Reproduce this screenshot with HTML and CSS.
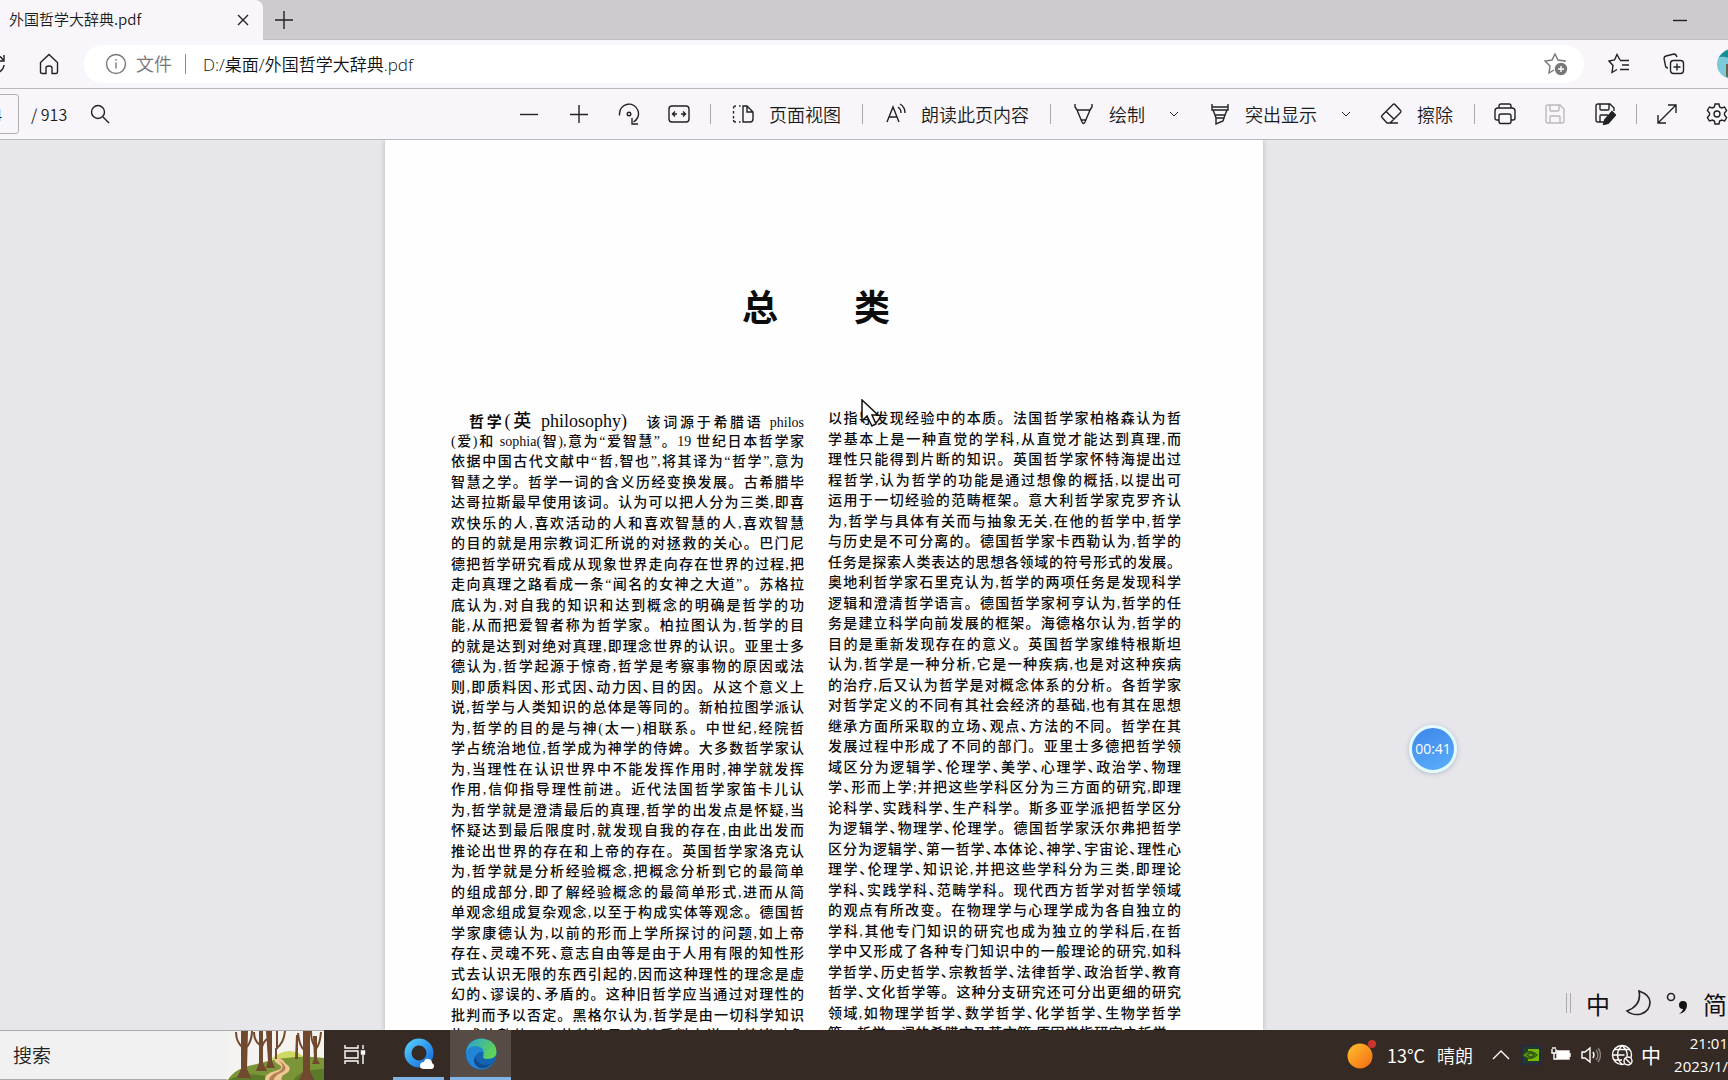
FILE: index.html
```html
<!DOCTYPE html>
<html lang="zh-CN">
<head>
<meta charset="utf-8">
<title>外国哲学大辞典.pdf</title>
<link rel="stylesheet" href="styles.css">
</head>
<body>
<header class="tabs">
  <div class="tab"><span class="tab-title">外国哲学大辞典.pdf</span><button class="plain" aria-label="关闭标签页"><svg width="12" height="12" viewBox="0 0 12 12"><path d="M1 1l10 10M11 1L1 11"/></svg></button></div>
  <button class="plain new-tab" aria-label="新建标签页"><svg width="18" height="18" viewBox="0 0 18 18"><path d="M9 0v18M0 9h18"/></svg></button>
  <button class="plain minimize" aria-label="最小化"><svg width="14" height="14" viewBox="0 0 14 14"><path d="M0 7.500h14"/></svg></button>
</header>

<nav class="address">
  <button class="plain reload" aria-label="刷新"><svg width="20" height="22" viewBox="0 0 20 22"><path d="M18 7a9 9 0 1 0 1 5M19 2v6h-6"/></svg></button>
  <button class="plain home" aria-label="主页"><svg width="20" height="22" viewBox="0 0 20 22"><path d="M1.500 9.500L10 1.500l8.500 8v9.500q0 1.500-1.500 1.500h-4v-5.500q0-2-3-2t-3 2v5.500h-4q-1.500 0-1.500-1.500z"/></svg></button>
  <div class="pill">
    <svg width="22" height="22" viewBox="0 0 22 22" class="grey"><circle cx="11" cy="11" r="9.500"/><path d="M11 9.500v6M11 6v1.500"/></svg>
    <label for="url">文件</label>
    <span class="bar"></span>
    <input id="url" value="D:/桌面/外国哲学大辞典.pdf">
    <button class="plain" aria-label="收藏此页"><svg width="24" height="24" viewBox="0 0 24 24" class="grey"><path d="M20 10l1-1-7-1-3-6-3 6-7 1 5 5-1 7 5-3"/><circle cx="17" cy="17" r="5.500" class="fill-grey"/><path d="M17 14v6M14 17h6" stroke="#fff"/></svg></button>
  </div>
  <button class="plain fav" aria-label="收藏夹"><svg width="22" height="22" viewBox="0 0 22 22"><path d="M12 7L9 1.500 6.500 7 1 8l4 4.500-1 7 5-3M12 7.500h9M14 12h7M12 16.500h9"/></svg></button>
  <button class="plain fav" aria-label="集锦"><svg width="22" height="22" viewBox="0 0 22 22"><rect x="7.500" y="7.500" width="13" height="13" rx="3"/><path d="M14 10.500v7M10.500 14h7M5 15q-2 0-2.500-2L1 5.500q0-2 2-2.500l8-2q2 0 3 3"/></svg></button>
  <svg class="avatar" width="30" height="30" viewBox="0 0 30 30"><circle cx="15" cy="15" r="15" fill="#7cc9d8" stroke="none"/><path d="M2 8Q8 0 15 0v11q-5-4-13-3z" fill="#168c96" stroke="none"/><path d="M9 15h6v15q-4-1-6-3z" fill="#66614f" stroke="none"/></svg>
</nav>

<div class="toolbar">
  <input class="page-no" aria-label="页码" value="4">
  <span class="total">/ 913</span>
  <button class="plain" aria-label="查找"><svg width="20" height="20" viewBox="0 0 20 20"><circle cx="8" cy="8" r="6.500"/><path d="M13 13l6 6"/></svg></button>
  <div class="tools">
    <button class="icon" aria-label="缩小"><svg width="18" height="18" viewBox="0 0 18 18"><path d="M0 9.500h18"/></svg></button>
    <button class="icon" aria-label="放大"><svg width="18" height="18" viewBox="0 0 18 18"><path d="M0 9.500h18M9 0v18"/></svg></button>
    <button class="icon" aria-label="旋转"><svg width="22" height="22" viewBox="0 0 22 22"><path d="M1.500 12.500v-2a9.500 9.500 0 1 1 14 8.500M14 15v6h6"/><circle cx="11" cy="11" r="1.800"/></svg></button>
    <button class="icon" aria-label="适合宽度"><svg width="22" height="22" viewBox="0 0 22 22"><rect x="1" y="3" width="20" height="16" rx="3"/><path d="M9 11H4.500M7 8.500L4.500 11 7 13.500M13 11h4.500M15 8.500l2.500 2.500-2.500 2.500"/></svg></button>
    <span class="sep"></span>
    <button class="text"><svg width="24" height="24" viewBox="0 0 24 24"><path d="M12 4v16h7q3 0 3-3v-7l-6-6zM16 4v6h6M5 4Q2.500 4 2.500 6.500M2.500 9v2.500M2.500 14v2.500M2.500 18q0 2 2.500 2M8 4h1.500M8 20h1.500"/></svg>页面视图</button>
    <span class="sep"></span>
    <button class="text"><svg width="24" height="24" viewBox="0 0 24 24"><path d="M4 20L10 5l6 15M6 15h8M15 5q3 2 3 6M17 2q5 3 5 9"/></svg>朗读此页内容</button>
    <span class="sep"></span>
    <button class="text"><svg width="24" height="24" viewBox="0 0 24 24"><path d="M4 2v3l2 3h13l2-3V2M6 8l5 12q1.500 3 3 0l5-12M10.500 18h4"/></svg>绘制</button>
    <button class="chev" aria-label="绘制选项"><svg width="10" height="10" viewBox="0 0 10 10"><path d="M1 3l4 4 4-4"/></svg></button>
    <button class="text"><svg width="24" height="24" viewBox="0 0 24 24"><path d="M5 2v6h16V2M5 5h16M6 8l2 5h10l2-5M8 13l1 3h8l1-3M9 16v6l7-3 1-3"/></svg>突出显示</button>
    <button class="chev" aria-label="突出显示选项"><svg width="10" height="10" viewBox="0 0 10 10"><path d="M1 3l4 4 4-4"/></svg></button>
    <button class="text"><svg width="24" height="24" viewBox="0 0 24 24"><path d="M14 2.500q1-1 2 0l5.500 6q1 1 0 2L11 21H8l-5-5.500q-1-1 0-2zM7 9.500l8 7.500M10 21h9"/></svg>擦除</button>
    <span class="sep"></span>
    <button class="icon" aria-label="打印"><svg width="22" height="22" viewBox="0 0 22 22"><path d="M5 5V3q0-2 2-2h8q2 0 2 2v2M5 17H3q-2 0-2-2V8q0-3 3-3h14q3 0 3 3v7q0 2-2 2h-2"/><rect x="5" y="11" width="12" height="9.500" rx="2"/></svg></button>
    <button class="icon off" aria-label="保存"><svg width="20" height="20" viewBox="0 0 20 20"><path d="M3 1h12l4 4v12q0 2-2 2H3q-2 0-2-2V3q0-2 2-2zM5 1v5q0 1 1 1h7q1 0 1-1V1M5 19v-6q0-1 1-1h8q1 0 1 1v6"/></svg></button>
    <button class="icon" aria-label="另存为"><svg width="22" height="22" viewBox="0 0 22 22"><path d="M10 19H4q-2 0-2-2V3q0-2 2-2h12l4 4v3M6 1v5q0 1 1 1h7q1 0 1-1V1M6 19v-6q0-1 1-1h7"/><path d="M18 9l3 3-7 8-4 1 1-4z" fill="#222" stroke-width="2"/></svg></button>
    <span class="sep"></span>
    <button class="icon" aria-label="全屏"><svg width="20" height="20" viewBox="0 0 20 20"><path d="M1 19L19 1M11 1h8v8M1 11v8h8"/></svg></button>
    <button class="icon" aria-label="设置"><svg width="22" height="22" viewBox="0 0 22 22"><path d="M9 1h4l.6 3 2 1 3-1 2 3.500L18.500 10v2l2.100 2.500-2 3.500-3-1-2 1-.6 3H9l-.6-3-2-1-3 1-2-3.500L3.500 12v-2L1.400 7.500l2-3.500 3 1 2-1z"/><circle cx="11" cy="11" r="3"/></svg></button>
  </div>
</div>

<main class="viewer">
  <article class="sheet">
    <h1><span>总</span><span>类</span></h1>
    <div class="columns">
      <div class="column">
        <p class="first"><b>哲学</b><span class="big">(英 philosophy)</span>　该词源于希腊语 philos</p>
        <p>(爱)和 sophia(智),意为“爱智慧”。19 世纪日本哲学家</p>
        <p>依据中国古代文献中“哲,智也”,将其译为“哲学”,意为</p>
        <p>智慧之学。哲学一词的含义历经变换发展。古希腊毕</p>
        <p>达哥拉斯最早使用该词。认为可以把人分为三类,即喜</p>
        <p>欢快乐的人,喜欢活动的人和喜欢智慧的人,喜欢智慧</p>
        <p>的目的就是用宗教词汇所说的对拯救的关心。巴门尼</p>
        <p>德把哲学研究看成从现象世界走向存在世界的过程,把</p>
        <p>走向真理之路看成一条“闻名的女神之大道”。苏格拉</p>
        <p>底认为,对自我的知识和达到概念的明确是哲学的功</p>
        <p>能,从而把爱智者称为哲学家。柏拉图认为,哲学的目</p>
        <p>的就是达到对绝对真理,即理念世界的认识。亚里士多</p>
        <p>德认为,哲学起源于惊奇,哲学是考察事物的原因或法</p>
        <p>则,即质料因<i>、</i>形式因<i>、</i>动力因<i>、</i>目的因。从这个意义上</p>
        <p>说,哲学与人类知识的总体是等同的。新柏拉图学派认</p>
        <p>为,哲学的目的是与神(太一)相联系。中世纪,经院哲</p>
        <p>学占统治地位,哲学成为神学的侍婢。大多数哲学家认</p>
        <p>为,当理性在认识世界中不能发挥作用时,神学就发挥</p>
        <p>作用,信仰指导理性前进。近代法国哲学家笛卡儿认</p>
        <p>为,哲学就是澄清最后的真理,哲学的出发点是怀疑,当</p>
        <p>怀疑达到最后限度时,就发现自我的存在,由此出发而</p>
        <p>推论出世界的存在和上帝的存在。英国哲学家洛克认</p>
        <p>为,哲学就是分析经验概念,把概念分析到它的最简单</p>
        <p>的组成部分,即了解经验概念的最简单形式,进而从简</p>
        <p>单观念组成复杂观念,以至于构成实体等观念。德国哲</p>
        <p>学家康德认为,以前的形而上学所探讨的问题,如上帝</p>
        <p>存在<i>、</i>灵魂不死<i>、</i>意志自由等是由于人用有限的知性形</p>
        <p>式去认识无限的东西引起的,因而这种理性的理念是虚</p>
        <p>幻的<i>、</i>谬误的<i>、</i>矛盾的。这种旧哲学应当通过对理性的</p>
        <p>批判而予以否定。黑格尔认为,哲学是由一切科学知识</p>
        <p>构成的整体。它的特性是,就其质料上说,对其诸对象</p>
      </div>
      <div class="column">
        <p>以指导发现经验中的本质。法国哲学家柏格森认为哲</p>
        <p>学基本上是一种直觉的学科,从直觉才能达到真理,而</p>
        <p>理性只能得到片断的知识。英国哲学家怀特海提出过</p>
        <p>程哲学,认为哲学的功能是通过想像的概括,以提出可</p>
        <p>运用于一切经验的范畴框架。意大利哲学家克罗齐认</p>
        <p>为,哲学与具体有关而与抽象无关,在他的哲学中,哲学</p>
        <p>与历史是不可分离的。德国哲学家卡西勒认为,哲学的</p>
        <p>任务是探索人类表达的思想各领域的符号形式的发展。</p>
        <p>奥地利哲学家石里克认为,哲学的两项任务是发现科学</p>
        <p>逻辑和澄清哲学语言。德国哲学家柯亨认为,哲学的任</p>
        <p>务是建立科学向前发展的框架。海德格尔认为,哲学的</p>
        <p>目的是重新发现存在的意义。英国哲学家维特根斯坦</p>
        <p>认为,哲学是一种分析,它是一种疾病,也是对这种疾病</p>
        <p>的治疗,后又认为哲学是对概念体系的分析。各哲学家</p>
        <p>对哲学定义的不同有其社会经济的基础,也有其在思想</p>
        <p>继承方面所采取的立场<i>、</i>观点<i>、</i>方法的不同。哲学在其</p>
        <p>发展过程中形成了不同的部门。亚里士多德把哲学领</p>
        <p>域区分为逻辑学<i>、</i>伦理学<i>、</i>美学<i>、</i>心理学<i>、</i>政治学<i>、</i>物理</p>
        <p>学<i>、</i>形而上学;并把这些学科区分为三方面的研究,即理</p>
        <p>论科学<i>、</i>实践科学<i>、</i>生产科学。斯多亚学派把哲学区分</p>
        <p>为逻辑学<i>、</i>物理学<i>、</i>伦理学。德国哲学家沃尔弗把哲学</p>
        <p>区分为逻辑学<i>、</i>第一哲学<i>、</i>本体论<i>、</i>神学<i>、</i>宇宙论<i>、</i>理性心</p>
        <p>理学<i>、</i>伦理学<i>、</i>知识论,并把这些学科分为三类,即理论</p>
        <p>学科<i>、</i>实践学科<i>、</i>范畴学科。现代西方哲学对哲学领域</p>
        <p>的观点有所改变。在物理学与心理学成为各自独立的</p>
        <p>学科,其他专门知识的研究也成为独立的学科后,在哲</p>
        <p>学中又形成了各种专门知识中的一般理论的研究,如科</p>
        <p>学哲学<i>、</i>历史哲学<i>、</i>宗教哲学<i>、</i>法律哲学<i>、</i>政治哲学<i>、</i>教育</p>
        <p>哲学<i>、</i>文化哲学等。这种分支研究还可分出更细的研究</p>
        <p>领域,如物理学哲学<i>、</i>数学哲学<i>、</i>化学哲学<i>、</i>生物学哲学</p>
        <p>等。哲学一词的希腊文及英文等,原因学指研究之哲学。</p>
      </div>
    </div>
  </article>
  <svg class="cursor" width="20" height="30" viewBox="0 0 20 30"><path d="M1 1v21l5-5 5 10 4-2-4-9h6z" fill="#fff" stroke="#111"/></svg>
  <div class="timer">00:41</div>
  <div class="ime">
    <span class="grip"></span><span>中</span>
    <svg width="26" height="26" viewBox="0 0 26 26"><path d="M14 1q3 14-12 20 6 5 14 3 9-3 9-12 0-7-11-11z" stroke-width="1.600"/></svg>
    <svg width="22" height="26" viewBox="0 0 22 26"><circle cx="5" cy="7" r="3.500" stroke-width="1.600"/><path d="M17 11a4 4 0 1 0 0 8q0 2-4 5 8-2 8-9 0-4-4-4z" fill="#111" stroke="none"/></svg>
    <span>简</span>
  </div>
</main>

<footer class="taskbar">
  <label class="search"><input value="搜索" aria-label="搜索">
    <svg width="97" height="50" viewBox="0 0 97 50">
      <rect width="97" height="50" fill="#f5f3f0" stroke="none"/>
      <path d="M44 28q10-8 18-8 10 0 17 8l-12 10z" fill="#cfd765" stroke="none"/>
      <path d="M0 50Q8 36 30 33q34-10 67-6v23z" fill="#7c9438" stroke="none"/>
      <path d="M0 50q16-10 38-5v5zM66 50q6-12 31-12v12z" fill="#5c7b2a" stroke="none"/>
      <path d="M48 28q6-2 11 5 8 5-1 10-5 3-3 7H38q-1-7 10-10 11-3 3-7-5-3-3-5z" fill="#efc893" stroke="none"/>
      <path d="M51 29q12 7 5 12-10 4-9 9h-5q0-6 9-9 9-5 0-12z" fill="#b38254" stroke="none"/>
      <g fill="#70492e" stroke="none"><path d="M14 0h7l-1 38 4 9H10l4-9zM32 0h4v32l4 8H29l3-8zM39 0h6v30l3 7h-9l2-7zM76 0h7v40l5 10H72l4-10zM86 5h4v23l3 5h-8l2-5zM69 4h2v24h-3z"/></g>
      <path d="M9 1q0 10 7 16M25 0q0 9-5 16M27 1q0 9 6 13M40 8q-3 2-5 8M58 0q-1 12-9 18v10M50 0v18M71 2q1 12 6 17M94 1q-1 12-5 17M84 0q0 10 4 16" stroke="#70492e" stroke-width="2"/>
    </svg></label>
  <button class="task" aria-label="任务视图"><svg width="22" height="22" viewBox="0 0 22 22" class="white"><path d="M1 1v3h13V1M1 20v-3h13v3M1 7h13v7H1zM19 1v4M19 11v9"/><path d="M17.500 7h3v3h-3z" fill="#fff"/></svg></button>
  <button class="task q running" aria-label="QQ浏览器"><svg width="30" height="32" viewBox="0 0 30 32">
    <defs><linearGradient id="qg" x1="0" y1="0" x2="1" y2="1"><stop offset="0" stop-color="#52c8fa"/><stop offset="1" stop-color="#176fe0"/></linearGradient></defs>
    <circle cx="15" cy="15" r="11" stroke="url(#qg)" stroke-width="7"/><path d="M20 31q-4 0-4-3 0-4 4-4 1-4 5-3 3 1 3 4 2 1 2 3 0 3-3 3z" fill="#fff" stroke="none"/></svg></button>
  <button class="task edge running" aria-label="Microsoft Edge"><svg width="32" height="32" viewBox="0 0 32 32">
    <defs><linearGradient id="eg" x1="0" y1="0" x2="1" y2="0.400"><stop offset="0" stop-color="#279ed8"/><stop offset="1" stop-color="#5fd35a"/></linearGradient></defs>
    <g stroke="none"><circle cx="16" cy="16" r="15.500" fill="#1464b4"/><path d="M1 14Q3 1 17 .5 31 2 31.500 14q0 7-9 7-6 0-4-4 1-8-7-8-7 0-10 5z" fill="url(#eg)"/><path d="M1 14q3-6 10-6 8 1 7 7-3-3-6 1-3 7 5 11 5 3 11-2-6 8-15 6Q1 28 1 14z" fill="#2386d5"/><path d="M12 16q-3 6 4 10 6 3 12-2-6 8-14 6-9-6-2-14z" fill="#114b91"/></g></svg></button>
  <div class="tray">
    <svg width="30" height="30" viewBox="0 0 30 30"><defs><linearGradient id="sg" x1="0" y1="0" x2="1" y2="1"><stop offset="0" stop-color="#ffc030"/><stop offset="1" stop-color="#f56a10"/></linearGradient></defs><circle cx="13" cy="16" r="12.500" fill="url(#sg)" stroke="none"/><circle cx="25" cy="4" r="4" fill="#c9372c" stroke="none"/></svg>
    <span class="temp">13°C</span><span class="sky">晴朗</span>
    <div class="status">
      <svg width="20" height="20" viewBox="0 0 20 20" class="white"><path d="M2 14l8-8 8 8"/></svg>
      <svg width="20" height="20" viewBox="0 0 20 20"><rect x="1" y="1" width="18" height="18" fill="#26392d" stroke="#1d2b50"/><path d="M7 4h11v12H7z" fill="#76b900" stroke="none"/><path d="M2 10q6-7 14 0-7 7-14 0zM6 10q4-4 7 0-3 4-7 0z" fill="#6aa30c" stroke="#325b18"/></svg>
      <svg width="20" height="20" viewBox="0 0 20 20" class="white"><rect x="6" y="6" width="12" height="8" fill="#fff"/><path d="M19 8v4M1 4v4h4V4M2 2v2M4 2v2M3 8v6h3"/></svg>
      <svg width="20" height="20" viewBox="0 0 20 20" class="white"><path d="M1 7h3l5-4v14l-5-4H1zM12 7q2 3 0 6"/><path d="M15 5q4 5 0 10M17 3q5 7 0 14" stroke="#8a817c"/></svg>
      <svg width="22" height="22" viewBox="0 0 22 22" class="white"><circle cx="11" cy="11" r="9.500"/><path d="M1.500 11h12M3 5.500h16M3 16h8M11 1.500q-9 9.500 0 19M11 1.500q6 5 5 11"/><circle cx="17" cy="17" r="4" fill="#362a24"/><path d="M14 14l6 6"/></svg>
    </div>
    <span class="lang">中</span>
    <div class="clock"><time>21:01</time><span>2023/1/</span></div>
  </div>
</footer>
</body>
</html>
```

FILE: styles.css
```css
* { box-sizing: border-box; }

body {
  margin: 0;
  height: 100vh;
  display: flex;
  flex-direction: column;
  overflow: hidden;
  background: #e7e6ea;
  color: #1b1b1b;
  font-family: "Noto Sans CJK SC", "Noto Sans", sans-serif;
  font-weight: 350;
  white-space: nowrap;
}

button, input { font: inherit; color: inherit; border: 0; padding: 0; background: none; }
button { display: flex; align-items: center; justify-content: center; flex: none; }
svg { display: block; flex: none; fill: none; stroke: #222; stroke-width: 1.4; }
.grey { stroke: #777; }
.white { stroke: #fff; }
.fill-grey { fill: #777; }

/* Tab strip */
.tabs { height: 40px; flex: none; display: flex; align-items: center; background: #cecbce; border-bottom: 1px solid #c2bfc3; }
.tab { width: 263px; height: 40px; padding: 0 14px 0 9px; display: flex; align-items: center; justify-content: space-between; background: #f8f6fa; border-top-right-radius: 8px; font-size: 15px; }
.tab-title { padding-bottom: 2px; }
.new-tab { margin-left: 12px; }
.minimize { margin-left: auto; margin-right: 41px; }

/* Address row */
.address { height: 49px; flex: none; display: flex; align-items: center; background: #f8f6fa; border-bottom: 1px solid #bab8bd; overflow: hidden; }
.reload { margin-left: -15px; }
.home { margin-left: 34px; }
.pill { flex: 1; height: 38px; margin-left: 25px; padding: 0 16px 0 21px; display: flex; align-items: center; border-radius: 19px; background: #fff; font-size: 18px; }
.pill label { margin-left: 9px; padding-bottom: 2px; color: #777; }
.bar { width: 1px; height: 20px; margin: 0 17px 0 13px; background: #888; }
.pill input { flex: 1; min-width: 0; padding-bottom: 2px; color: #111; outline: 0; font-family: "Open Sans", "Noto Sans CJK SC", sans-serif; font-size: 17px; }
.fav { margin-left: 24px; }
.fav + .fav { margin-left: 33px; }
.avatar { margin: 0 -19px 0 32px; }

/* PDF toolbar */
.toolbar { height: 51px; flex: none; display: flex; align-items: center; background: #f8f6fa; border-bottom: 1px solid #bab8bd; overflow: hidden; }
.page-no { width: 59px; height: 40px; margin-left: -40px; padding-right: 16px; text-align: right; border: 1px solid #b3b1b6; border-radius: 3px; font-size: 16px; }
.total { margin: 0 23px 0 12px; font-size: 16px; }
.tools { display: flex; align-items: center; margin-left: auto; margin-right: -14px; font-size: 18px; }
.icon { width: 50px; height: 40px; }
.text { height: 40px; padding: 0 15px; gap: 14px; }
.chev { width: 28px; height: 40px; margin-right: 4px; }
.chev svg { stroke-width: 1; }
.off svg { stroke: #bbb9bd; }
.sep { width: 12px; height: 20px; display: flex; justify-content: center; }
.sep::before { content: ""; width: 1px; background: #aaa8ac; }

/* Document */
.viewer { position: relative; flex: 1; min-height: 0; overflow: hidden; display: grid; grid-template-columns: 385fr 878px 465fr; }
.sheet { grid-column: 2; min-height: 0; padding: 130px 82px 0 66px; background: #fefefe; box-shadow: 0 0 5px #b8b6bc; color: #0c0c0c; }
h1 { display: flex; justify-content: center; gap: 76px; height: 139px; margin: 0; font-size: 36px; line-height: 70px; font-weight: 700; }
.columns { display: grid; grid-template-columns: 1fr 1fr; gap: 24px; }
.column { display: grid; grid-auto-rows: 1fr; height: 636px; min-width: 0; font-family: "Liberation Serif", "Noto Sans CJK SC", serif; font-size: 14px; font-weight: 500; line-height: 20px; }
.column:first-child { margin-top: 2px; }
.column p { margin: 0; min-width: 0; text-align: justify; text-align-last: justify; white-space: normal; height: 20px; }
.column .first { padding-left: 18px; }
.column i { font-style: normal; font-feature-settings: "halt"; }
.column b { font-size: 15px; font-weight: 700; }
.big { font-size: 18px; }

/* Things floating over the document */
.cursor { position: absolute; left: 861px; top: 259px; stroke-width: 1.5; }
.timer { position: absolute; right: 271px; bottom: 257px; width: 48px; height: 48px; border: 3px solid #e2fbff; border-radius: 50%; background: linear-gradient(160deg, #3f86ea, #5aaefa); box-shadow: 0 1px 5px #b3b8c4; color: #fff; font: 14px/42px "Open Sans", sans-serif; text-align: center; }
.ime { position: absolute; right: 0; bottom: 6px; width: 171px; height: 42px; padding-left: 9px; display: flex; align-items: center; gap: 15px; overflow: hidden; background: #e9e6ea; color: #111; font-size: 24px; font-weight: 400; }
.grip { flex: none; width: 5px; height: 20px; border: solid #aaa; border-width: 0 1px; }

/* Taskbar */
.taskbar { height: 50px; flex: none; display: flex; align-items: stretch; background: #362a24; color: #fff; overflow: hidden; }
.search { width: 324px; display: flex; background: #f2f1f2; border: solid #aaa; border-width: 1px 0; }
.search input { flex: 1; min-width: 0; padding: 0 0 2px 13px; color: #222; font-size: 19px; }
.task { width: 61px; }
.task.q { width: 51px; margin: 0 6px 0 8px; }
.running { border-bottom: 3px solid #82b3e6; }
.task.edge { background: #574b46; }
.tray { margin-left: auto; display: flex; align-items: center; font-size: 18px; }
.temp { margin: 0 12px 0 10px; font-weight: 400; }
.sky { margin-right: 18px; }
.status { display: flex; align-items: center; gap: 10px; }
.lang { margin: 0 13px 0 8px; font-size: 20px; font-weight: 400; }
.clock { display: flex; flex-direction: column; align-items: flex-end; font: 15px/23px "Open Sans", sans-serif; }
```
